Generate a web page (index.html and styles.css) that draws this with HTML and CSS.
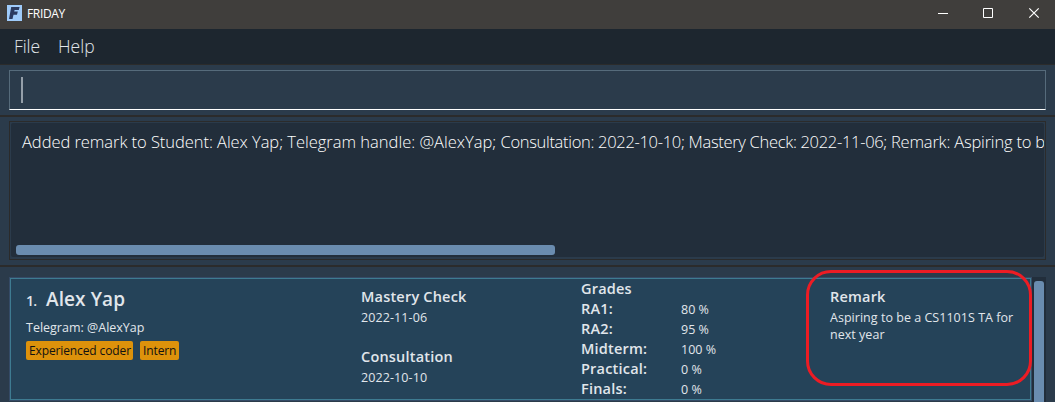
FILE: index.html
```html
<!DOCTYPE html>
<html lang="en">
<head>
<meta charset="utf-8">
<title>FRIDAY</title>
<link rel="stylesheet" href="styles.css">
</head>
<body>
<div class="window">
  <header class="titlebar">
    <svg class="logo" width="15" height="16" viewBox="0 0 15 16"><rect width="15" height="16" fill="#9fcbfa"/><path d="M4.2 2H12.6L11.8 5H7.6L7.2 6.6H10.8L10 9.8H6.5L5.5 14H2Z" fill="#2b3a5f"/></svg>
    <span class="app-name">FRIDAY</span>
    <svg class="controls" width="104" height="12" viewBox="0 0 104 12" fill="none" stroke="#fff"><path d="M0 6.5H10M45.5 1.5H54.5V10.5H45.5Z"/><path d="M91.3 1.3L100.7 10.7M100.7 1.3L91.3 10.7" stroke-width="1.2"/></svg>
  </header>
  <nav class="menu"><span class="menu-file">File</span><span class="menu-help">Help</span></nav>
  <section class="command"><div class="field"><i class="caret"></i></div></section>
  <section class="result">
    <div class="result-frame"><div class="result-body">
      <p class="message"><span class="loose">Added remark to Student: Alex Yap; </span><span class="looser">Telegram handle: @AlexYap; </span><span class="tight">Consultation: 2022-10-10; Mastery Check: 2022-11-06; </span><span>Remark: Aspiring to b</span></p>
      <div class="hthumb"></div>
    </div></div>
  </section>
  <main class="list">
    <article class="card">
      <div class="student">
        <div class="name-row"><span class="index">1.</span><span class="name">Alex Yap</span></div>
        <div class="detail telegram">Telegram: @AlexYap</div>
        <div class="tags"><span class="tag tag-coder">Experienced coder</span><span class="tag tag-intern">Intern</span></div>
      </div>
      <div class="dates">
        <div class="heading">Mastery Check</div><div class="detail date">2022-11-06</div>
        <div class="heading wide">Consultation</div><div class="detail date">2022-10-10</div>
      </div>
      <div class="grades">
        <div class="heading">Grades</div><span></span>
        <div class="heading">RA1:</div><span class="detail">80 %</span>
        <div class="heading">RA2:</div><span class="detail">95 %</span>
        <div class="heading">Midterm:</div><span class="detail">100 %</span>
        <div class="heading">Practical:</div><span class="detail">0 %</span>
        <div class="heading">Finals:</div><span class="detail">0 %</span>
      </div>
      <div class="remark">
        <div class="heading">Remark</div>
        <div class="detail remark-text">Aspiring to be a CS1101S TA for<br>next year</div>
      </div>
      <div class="highlight"></div>
    </article>
    <div class="vtrack"><div class="vthumb"></div></div>
  </main>
</div>
</body>
</html>
```
FILE: styles.css
```css
* { box-sizing: border-box; }
body { margin: 0; background: #2b3b4b; color: #e1e6eb; font-family: "Open Sans", "Noto Sans", sans-serif; }
.window { width: 1055px; height: 402px; overflow: hidden; display: flex; flex-direction: column; white-space: nowrap; }
.titlebar { flex: 0 0 29px; background: #403e3c; display: flex; align-items: center; padding: 0 11px 3px 7px; }
.app-name { margin-left: 5px; font-size: 12px; letter-spacing: -0.35px; color: #fff; }
.controls { margin-left: auto; margin-right: 2px; }
.menu { flex: 0 0 36px; background: #1d262f; border-bottom: 1px solid #2b2b2b; padding-left: 14px; display: flex; line-height: 35px; font-size: 17.5px; font-weight: 300; }
.menu-file { width: 44px; letter-spacing: -0.1px; }
.menu-help { letter-spacing: 0; }
.command { flex: 0 0 52px; padding: 5px 9px 5px; border-bottom: 2px solid #2b2b2b; }
.field { height: 40px; border: 1px solid #566b7b; border-bottom-color: #fff; padding: 6px 0 0 11px; }
.caret { display: block; width: 2px; height: 26px; background: #959fa9; }
.result { flex: 0 0 150px; padding: 4px 9px 5px; border-bottom: 2px solid #2b2b2b; }
.result-frame { height: 139px; border: 1px solid #2b2b2b; padding: 1px 1px 2px; }
.result-body { height: 134px; background: #222e3b; overflow: hidden; border-radius: 2px; padding: 6px 0 0 5px; }
.message { margin: 0 0 0 6px; height: 116px; line-height: 26px; font-size: 16.5px; font-weight: 300; letter-spacing: -0.19px; color: #fff; }
.loose { letter-spacing: -0.05px; }
.looser { letter-spacing: 0; }
.tight { letter-spacing: -0.31px; }
.hthumb { width: 539px; height: 10px; border-radius: 3px; background: #6a8caf; }
.list { flex: 1; padding: 10px 9px 0; display: flex; }
.card { position: relative; flex: 0 0 1021px; height: 122px; margin: 1px 0 0 1px; border: 1px solid #3e7b91; box-shadow: 0 0 0 1px #354a66; background: #254359; display: grid; grid-template-columns: 350px 220px 249px 1fr; }
.student { padding: 9px 0 0 15px; }
.name-row { height: 28px; display: flex; align-items: baseline; line-height: 22px; }
.index { width: 20px; font-size: 14px; font-weight: 600; letter-spacing: -0.8px; }
.name { font-size: 19px; font-weight: 600; letter-spacing: 0.1px; }
.detail { font-size: 12.5px; line-height: 17px; }
.telegram { margin-top: 3px; height: 22px; }
.tags { display: flex; gap: 7px; }
.tag { height: 19px; border-radius: 2px; background: #dd920b; color: #111; font-size: 12px; line-height: 19px; padding-left: 3px; letter-spacing: -0.12px; font-weight: 500; }
.tag-coder { width: 107px; }
.tag-intern { width: 39px; }
.heading { font-size: 14.5px; font-weight: 600; line-height: 20px; letter-spacing: 0.2px; }
.dates { padding-top: 8px; }
.date { padding-top: 2px; height: 40px; letter-spacing: 0.1px; }
.grades { padding-top: 0; display: grid; grid-template-columns: 100px 1fr; grid-template-rows: repeat(6, 20px); align-items: center; align-content: start; }
.remark { padding-top: 8px; }
.remark-text { padding-top: 2px; letter-spacing: 0.03px; }
.highlight { position: absolute; left: 795px; top: -9px; width: 226px; height: 116px; border: 3px solid #ed1c24; border-radius: 25px; }
.vtrack { flex: 0 0 15px; background: #222e3b; padding: 4px 2px 0 3px; }
.vthumb { height: 140px; border-radius: 3px; background: #6a8caf; }
```
